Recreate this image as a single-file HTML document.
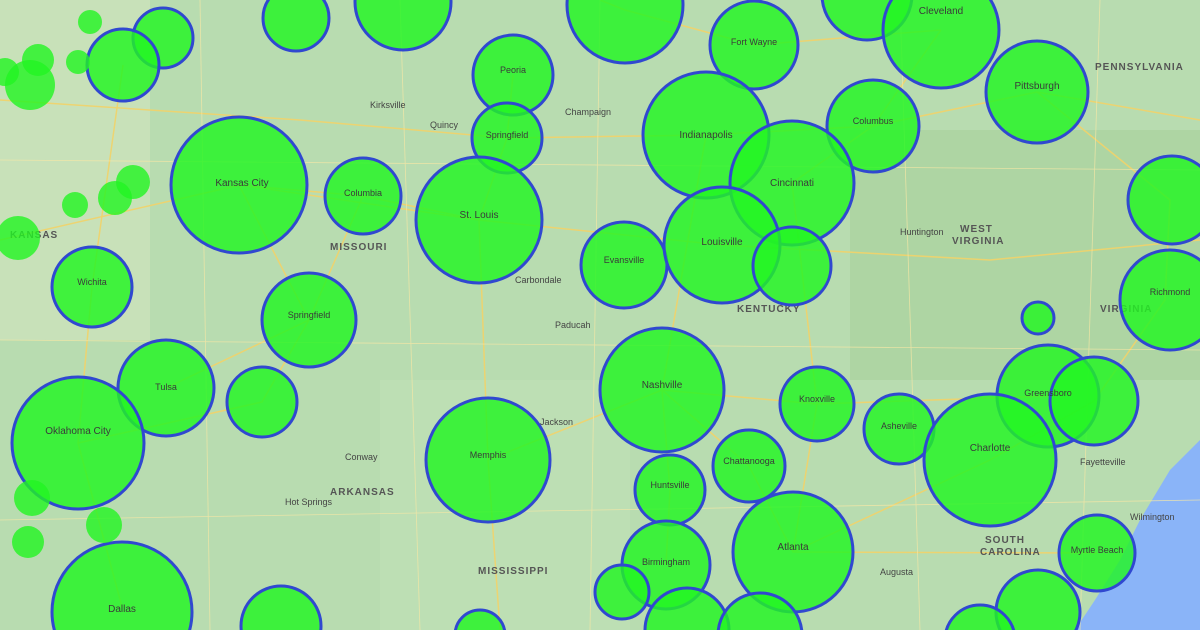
<!DOCTYPE html>
<html><head><meta charset="utf-8"><style>
html,body{margin:0;padding:0;width:1200px;height:630px;overflow:hidden;background:#b8dcb0;font-family:"Liberation Sans",sans-serif}
svg{display:block;position:absolute;left:0;top:0}
.l{font-size:10px;fill:#555;font-weight:bold;letter-spacing:1px}
.c{font-size:9px;fill:#444}
</style></head><body>
<svg width="1200" height="630" viewBox="0 0 1200 630" xmlns="http://www.w3.org/2000/svg">
<rect width="1200" height="630" fill="#b8dcb0"/>
<rect x="0" y="0" width="150" height="340" fill="#d2e4c0" opacity="0.6"/>
<rect x="850" y="130" width="350" height="250" fill="#a6d19b" opacity="0.6"/>
<rect x="380" y="380" width="250" height="250" fill="#c2e2b8" opacity="0.5"/>
<polygon points="1200,440 1170,470 1140,520 1120,560 1095,600 1075,630 1200,630" fill="#8ab4f8"/>
<g stroke="#f2d36a" stroke-width="1.5" fill="none" opacity="0.9">
<path d="M0,240 L240,185 L479,220 L722,245 L990,260 L1200,240"/>
<path d="M479,220 L488,460 L500,630"/>
<path d="M239,185 L309,320 L262,402 L78,443"/>
<path d="M706,135 L662,390 L670,490 L666,565"/>
<path d="M513,75 L507,138 L479,220"/>
<path d="M792,183 L817,404 L793,552"/>
<path d="M941,30 L873,126 L792,183"/>
<path d="M1037,92 L1170,200 L1165,300 L1094,401 L990,460 L793,552"/>
<path d="M122,607 L78,443 L92,287 L123,65"/>
<path d="M600,0 L625,10 L754,45 L941,30"/>
<path d="M363,196 L309,320 L166,388"/>
<path d="M479,220 L363,196 L239,185"/>
<path d="M662,390 L749,466 L793,552 L1097,553"/>
<path d="M488,460 L662,390 L817,404 L1048,396"/>
<path d="M1200,120 L1037,92 L873,126 L706,135 L507,138 L300,120 L0,100"/>
</g>
<g stroke="#f5e7a6" stroke-width="0.8" fill="none" opacity="0.8">
<path d="M0,160 L1200,170"/><path d="M0,340 L1200,350"/><path d="M0,520 L1200,500"/>
<path d="M200,0 L210,630"/><path d="M400,0 L420,630"/><path d="M600,0 L590,630"/><path d="M900,0 L920,630"/><path d="M1100,0 L1080,630"/>
</g>
<g>
<text class="l" x="330" y="250">MISSOURI</text>
<text class="l" x="737" y="312">KENTUCKY</text>
<text class="l" x="960" y="232">WEST</text>
<text class="l" x="952" y="244">VIRGINIA</text>
<text class="l" x="1100" y="312">VIRGINIA</text>
<text class="l" x="330" y="495">ARKANSAS</text>
<text class="l" x="478" y="574">MISSISSIPPI</text>
<text class="l" x="1095" y="70">PENNSYLVANIA</text>
<text class="l" x="10" y="238">KANSAS</text>
<text class="l" x="985" y="543">SOUTH</text>
<text class="l" x="980" y="555">CAROLINA</text>
<text class="c" x="370" y="108">Kirksville</text>
<text class="c" x="430" y="128">Quincy</text>
<text class="c" x="565" y="115">Champaign</text>
<text class="c" x="900" y="235">Huntington</text>
<text class="c" x="515" y="283">Carbondale</text>
<text class="c" x="555" y="328">Paducah</text>
<text class="c" x="345" y="460">Conway</text>
<text class="c" x="285" y="505">Hot Springs</text>
<text class="c" x="540" y="425">Jackson</text>
<text class="c" x="880" y="575">Augusta</text>
<text class="c" x="1130" y="520">Wilmington</text>
<text class="c" x="1080" y="465">Fayetteville</text>
</g>
<g fill="#22f522" fill-opacity="0.82" stroke="#3048d0" stroke-width="3">
<circle cx="296" cy="18" r="33"/><circle cx="403" cy="2" r="48"/><circle cx="625" cy="5" r="58"/>
<circle cx="754" cy="45" r="44"/><circle cx="867" cy="-5" r="45"/><circle cx="941" cy="30" r="58"/>
<circle cx="1037" cy="92" r="51"/><circle cx="163" cy="38" r="30"/><circle cx="123" cy="65" r="36"/>
<circle cx="513" cy="75" r="40"/><circle cx="507" cy="138" r="35"/><circle cx="706" cy="135" r="63"/>
<circle cx="873" cy="126" r="46"/><circle cx="792" cy="183" r="62"/><circle cx="1172" cy="200" r="44"/>
<circle cx="239" cy="185" r="68"/><circle cx="363" cy="196" r="38"/><circle cx="479" cy="220" r="63"/>
<circle cx="92" cy="287" r="40"/><circle cx="309" cy="320" r="47"/><circle cx="624" cy="265" r="43"/>
<circle cx="722" cy="245" r="58"/><circle cx="792" cy="266" r="39"/><circle cx="1170" cy="300" r="50"/>
<circle cx="1038" cy="318" r="16"/><circle cx="166" cy="388" r="48"/><circle cx="262" cy="402" r="35"/>
<circle cx="78" cy="443" r="66"/><circle cx="488" cy="460" r="62"/><circle cx="662" cy="390" r="62"/>
<circle cx="817" cy="404" r="37"/><circle cx="899" cy="429" r="35"/><circle cx="1048" cy="396" r="51"/>
<circle cx="1094" cy="401" r="44"/><circle cx="990" cy="460" r="66"/><circle cx="749" cy="466" r="36"/>
<circle cx="670" cy="490" r="35"/><circle cx="793" cy="552" r="60"/><circle cx="666" cy="565" r="44"/>
<circle cx="622" cy="592" r="27"/><circle cx="687" cy="630" r="42"/><circle cx="760" cy="635" r="42"/>
<circle cx="1097" cy="553" r="38"/><circle cx="1038" cy="612" r="42"/><circle cx="980" cy="640" r="35"/>
<circle cx="122" cy="612" r="70"/><circle cx="281" cy="626" r="40"/><circle cx="480" cy="635" r="25"/>
</g>
<g fill="#22f522" fill-opacity="0.8">
<circle cx="90" cy="22" r="12"/><circle cx="30" cy="85" r="25"/><circle cx="38" cy="60" r="16"/>
<circle cx="78" cy="62" r="12"/><circle cx="133" cy="182" r="17"/><circle cx="115" cy="198" r="17"/>
<circle cx="75" cy="205" r="13"/><circle cx="18" cy="238" r="22"/><circle cx="32" cy="498" r="18"/>
<circle cx="104" cy="525" r="18"/><circle cx="28" cy="542" r="16"/><circle cx="5" cy="72" r="14"/>
</g>
<g font-size="9" fill="#3a3a3a" text-anchor="middle">
<text x="242" y="186" font-size="10">Kansas City</text><text x="479" y="218" font-size="10">St. Louis</text>
<text x="706" y="138" font-size="10">Indianapolis</text><text x="792" y="186" font-size="10">Cincinnati</text>
<text x="722" y="245" font-size="10">Louisville</text><text x="662" y="388" font-size="10">Nashville</text>
<text x="488" y="458">Memphis</text><text x="990" y="451" font-size="10">Charlotte</text>
<text x="793" y="550" font-size="10">Atlanta</text><text x="78" y="434" font-size="10">Oklahoma City</text>
<text x="941" y="14" font-size="10">Cleveland</text><text x="1037" y="89" font-size="10">Pittsburgh</text>
<text x="873" y="124">Columbus</text><text x="166" y="390">Tulsa</text><text x="122" y="612" font-size="10">Dallas</text>
<text x="309" y="318">Springfield</text><text x="624" y="263">Evansville</text><text x="817" y="402">Knoxville</text>
<text x="1170" y="295">Richmond</text><text x="92" y="285">Wichita</text><text x="754" y="45">Fort Wayne</text>
<text x="363" y="196">Columbia</text><text x="513" y="73">Peoria</text><text x="507" y="138">Springfield</text>
<text x="749" y="464">Chattanooga</text><text x="670" y="488">Huntsville</text><text x="666" y="565">Birmingham</text>
<text x="1097" y="553">Myrtle Beach</text><text x="1048" y="396">Greensboro</text><text x="899" y="429">Asheville</text>
</g>
</svg>
</body></html>
